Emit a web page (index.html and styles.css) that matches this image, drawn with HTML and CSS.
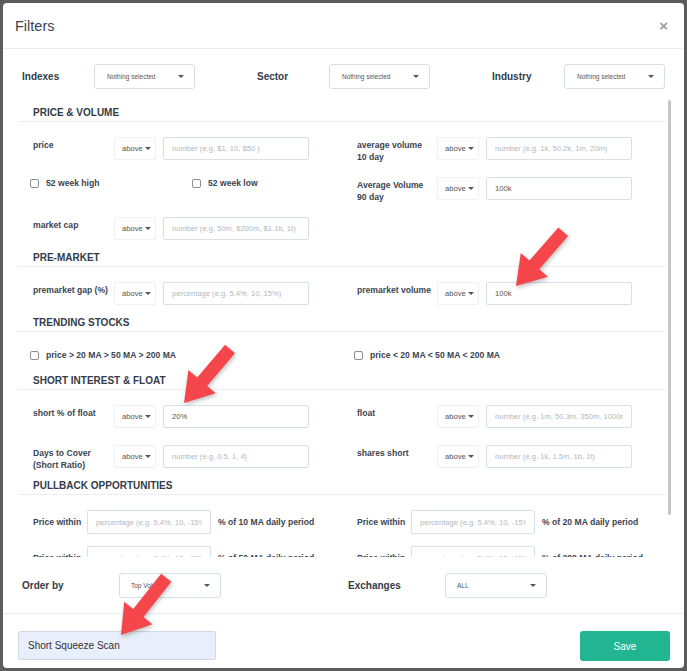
FILE: index.html
```html
<!DOCTYPE html>
<html>
<head>
<meta charset="utf-8">
<title>Filters</title>
<link rel="stylesheet" href="styles.css">
</head>
<body>
<div class="modal">
  <div class="modal-header">
    <h4 class="modal-title">Filters</h4>
    <span class="close">×</span>
  </div>
  <div class="modal-body">
    <div class="top-row">
      <div class="top-field"><div class="top-label">Indexes</div><div class="select select-lg"><span>Nothing selected</span><i class="caret"></i></div></div>
      <div class="top-field"><div class="top-label">Sector</div><div class="select select-lg"><span>Nothing selected</span><i class="caret"></i></div></div>
      <div class="top-field"><div class="top-label">Industry</div><div class="select select-lg"><span>Nothing selected</span><i class="caret"></i></div></div>
    </div>

    <div class="scroll">
      <div class="scroll-content">
        <section class="section">
          <h5 class="section-title">Price &amp; Volume</h5>
          <div class="section-body">
            <div class="col">
              <div class="field"><div class="field-label">price</div><div class="select select-sm"><span>above</span><i class="caret"></i></div><input class="input" placeholder="number (e.g. $1, 10, $50 )"></div>
              <div class="check-row">
                <label class="check"><input type="checkbox" class="cb"><span>52 week high</span></label>
                <label class="check"><input type="checkbox" class="cb"><span>52 week low</span></label>
              </div>
              <div class="field"><div class="field-label">market cap</div><div class="select select-sm"><span>above</span><i class="caret"></i></div><input class="input" placeholder="number (e.g. 50m, $200m, $1.1b, 1t)"></div>
            </div>
            <div class="col col-right">
              <div class="field"><div class="field-label">average volume<br>10 day</div><div class="select select-sm"><span>above</span><i class="caret"></i></div><input class="input" placeholder="number (e.g. 1k, 50.2k, 1m, 20m)"></div>
              <div class="field"><div class="field-label">Average Volume<br>90 day</div><div class="select select-sm"><span>above</span><i class="caret"></i></div><input class="input" value="100k"></div>
            </div>
          </div>
        </section>

        <section class="section">
          <h5 class="section-title">Pre-Market</h5>
          <div class="section-body">
            <div class="col">
              <div class="field"><div class="field-label">premarket gap (%)</div><div class="select select-sm"><span>above</span><i class="caret"></i></div><input class="input" placeholder="percentage (e.g. 5.4%, 10, 15%)"></div>
            </div>
            <div class="col col-right">
              <div class="field"><div class="field-label">premarket volume</div><div class="select select-sm"><span>above</span><i class="caret"></i></div><input class="input" value="100k"></div>
            </div>
          </div>
        </section>

        <section class="section">
          <h5 class="section-title">Trending Stocks</h5>
          <div class="section-body">
            <div class="trend-row"><label class="check"><input type="checkbox" class="cb"><span>price &gt; 20 MA &gt; 50 MA &gt; 200 MA</span></label></div>
            <div class="trend-row"><label class="check"><input type="checkbox" class="cb"><span>price &lt; 20 MA &lt; 50 MA &lt; 200 MA</span></label></div>
          </div>
        </section>

        <section class="section">
          <h5 class="section-title">Short Interest &amp; Float</h5>
          <div class="section-body">
            <div class="col">
              <div class="field"><div class="field-label">short % of float</div><div class="select select-sm"><span>above</span><i class="caret"></i></div><input class="input" value="20%"></div>
              <div class="field"><div class="field-label">Days to Cover<br>(Short Ratio)</div><div class="select select-sm"><span>above</span><i class="caret"></i></div><input class="input" placeholder="number (e.g. 0.5, 1, 4)"></div>
            </div>
            <div class="col col-right">
              <div class="field"><div class="field-label">float</div><div class="select select-sm"><span>above</span><i class="caret"></i></div><input class="input" placeholder="number (e.g. 1m, 50.3m, 350m, 1000m)"></div>
              <div class="field"><div class="field-label">shares short</div><div class="select select-sm"><span>above</span><i class="caret"></i></div><input class="input" placeholder="number (e.g. 1k, 1.5m, 1b, 1t)"></div>
            </div>
          </div>
        </section>

        <section class="section">
          <h5 class="section-title">Pullback Opportunities</h5>
          <div class="section-body">
            <div class="col pb-col">
              <div class="pb-row"><div class="pb-label">Price within</div><input class="input pb-input" placeholder="percentage (e.g. 5.4%, 10, -15%)"><span class="pb-text">% of 10 MA daily period</span></div>
              <div class="pb-row"><div class="pb-label">Price within</div><input class="input pb-input" placeholder="percentage (e.g. 5.4%, 10, -15%)"><span class="pb-text">% of 50 MA daily period</span></div>
            </div>
            <div class="col pb-col">
              <div class="pb-row"><div class="pb-label">Price within</div><input class="input pb-input" placeholder="percentage (e.g. 5.4%, 10, -15%)"><span class="pb-text">% of 20 MA daily period</span></div>
              <div class="pb-row"><div class="pb-label">Price within</div><input class="input pb-input" placeholder="percentage (e.g. 5.4%, 10, -15%)"><span class="pb-text">% of 200 MA daily period</span></div>
            </div>
          </div>
        </section>
      </div>
      <div class="scrollbar"><div class="thumb"></div></div>
    </div>

    <div class="order-row">
      <div class="order-field"><div class="order-label">Order by</div><div class="select select-md"><span>Top Volume</span><i class="caret"></i></div></div>
      <div class="order-field"><div class="order-label">Exchanges</div><div class="select select-md"><span>ALL</span><i class="caret"></i></div></div>
    </div>
  </div>
  <div class="modal-footer">
    <input class="name-input" value="Short Squeeze Scan">
    <button class="btn-save">Save</button>
  </div>
</div>

<svg class="arrows" width="687" height="671" viewBox="0 0 687 671">
  <g fill="#f5474b">
    <polygon transform="translate(516 286) rotate(131)" points="0,0 -28,-18 -28,-6.5 -72,-6.5 -72,6.5 -28,6.5 -28,18"/>
    <polygon transform="translate(184 403) rotate(130.4)" points="0,0 -28,-18 -28,-6.5 -71,-6.5 -71,6.5 -28,6.5 -28,18"/>
    <polygon transform="translate(121 635) rotate(128.3)" points="0,0 -28,-18 -28,-6.5 -73,-6.5 -73,6.5 -28,6.5 -28,18"/>
  </g>
</svg>
</body>
</html>
```

FILE: styles.css
```css
* { box-sizing: border-box; }
html, body { margin: 0; padding: 0; }
body {
  width: 687px;
  height: 671px;
  padding: 3px;
  background: #5c5c5c;
  font-family: "Liberation Sans", Arial, sans-serif;
  position: relative;
  overflow: hidden;
}
.modal {
  width: 681px;
  height: 665px;
  background: #fff;
  border-radius: 4px;
  display: flex;
  flex-direction: column;
  overflow: hidden;
}
.modal-header {
  flex: none;
  height: 46px;
  border-bottom: 1px solid #e9ecf0;
  display: flex;
  align-items: center;
  justify-content: space-between;
  padding: 0 16px 0 12px;
}
.modal-title {
  margin: 0;
  font-size: 14.5px;
  font-weight: normal;
  color: #394350;
}
.close {
  font-size: 15px;
  font-weight: bold;
  color: #9d9d9d;
  line-height: 1;
}
.modal-body {
  flex: none;
  padding: 15px 12px 15px 15px;
}
.top-row {
  display: grid;
  grid-template-columns: repeat(3, 173px);
  column-gap: 62px;
  margin: 0 0 6px 4px;
  height: 25px;
}
.top-field, .order-field {
  display: flex;
  align-items: center;
}
.top-label {
  width: 72px;
  font-size: 10px;
  font-weight: bold;
  color: #333c48;
}
.select {
  display: flex;
  align-items: center;
  justify-content: space-between;
  background: #fff;
  color: #555;
  white-space: nowrap;
}
.select-lg {
  width: 101px;
  height: 25px;
  border: 1px solid #d8dee8;
  border-radius: 3px;
  padding: 0 10px 0 12px;
  font-size: 6.5px;
}
.select-md {
  width: 102px;
  height: 25px;
  border: 1px solid #d8dee8;
  border-radius: 3px;
  padding: 0 10px 0 11px;
  font-size: 6.5px;
}
.select-sm {
  flex: none;
  width: 42px;
  height: 23px;
  border: 1px solid #eef0f3;
  border-radius: 2px;
  padding: 0 4px 0 7px;
  font-size: 7.6px;
  margin-right: 7px;
}
.caret {
  width: 0;
  height: 0;
  border-top: 3px solid #555;
  border-left: 3px solid transparent;
  border-right: 3px solid transparent;
}
.scroll {
  display: flex;
  height: 462px;
}
.scroll-content {
  flex: 1;
  overflow: hidden;
}
.scrollbar {
  width: 6px;
  padding: 5px 1px 0 2px;
}
.thumb {
  height: 415px;
  background: #c6c6c6;
  border-radius: 2px;
}
.section-title {
  margin: 0;
  padding: 12px 0 2px 15px;
  line-height: 12px;
  font-size: 10px;
  font-weight: bold;
  text-transform: uppercase;
  color: #333c48;
  border-bottom: 1px solid #eceef2;
}
.section-body {
  display: grid;
  grid-template-columns: 324px 1fr;
  padding: 15px 0 0 15px;
}
.col {
  display: flex;
  flex-direction: column;
  gap: 17px;
}
.field {
  display: flex;
  align-items: flex-start;
  height: 23px;
}
.field-label {
  flex: none;
  width: 81px;
  padding-top: 2px;
  line-height: 12px;
  font-size: 8.6px;
  font-weight: bold;
  color: #3b4451;
  white-space: nowrap;
}
.col-right .field-label { width: 80px; }
.input {
  flex: none;
  width: 146px;
  height: 23px;
  border: 1px solid #d8deea;
  border-radius: 2px;
  padding: 0 8px;
  margin: 0;
  font: 7.6px "Liberation Sans", Arial, sans-serif;
  color: #555;
  background: #fff;
  outline: none;
}
.input::placeholder { color: #b3b7bd; }
.check-row {
  display: flex;
  height: 23px;
  margin-left: -3px;
}
.check {
  display: flex;
  align-items: center;
  gap: 7px;
  width: 162px;
  height: 12px;
  font-size: 8.6px;
  font-weight: bold;
  color: #3b4451;
  white-space: nowrap;
}
.cb {
  -webkit-appearance: none;
  appearance: none;
  flex: none;
  margin: 0;
  width: 9px;
  height: 9px;
  border: 1px solid #8f8f8f;
  border-radius: 2px;
  background: #fff;
}
.trend-row {
  display: flex;
  align-items: center;
  height: 16px;
  margin-left: -3px;
}
.pb-col { gap: 12px; }
.pb-row {
  display: flex;
  align-items: center;
  height: 24px;
}
.pb-label {
  flex: none;
  width: 54px;
  font-size: 8.6px;
  font-weight: bold;
  color: #3b4451;
}
.pb-input {
  width: 124px;
  height: 24px;
  margin-right: 7px;
}
.pb-text {
  font-size: 8.6px;
  font-weight: bold;
  color: #3b4451;
  white-space: nowrap;
}
.order-row {
  display: grid;
  grid-template-columns: 326px 1fr;
  height: 25px;
  margin: 16px 0 0 4px;
}
.order-label {
  width: 97px;
  font-size: 10px;
  font-weight: bold;
  color: #333c48;
}
.modal-footer {
  flex: none;
  border-top: 1px solid #e9ecf0;
  padding: 17px 14px 7px 15px;
  display: flex;
  justify-content: space-between;
  align-items: flex-start;
}
.name-input {
  width: 198px;
  height: 29px;
  margin: 0;
  border: 1px solid #cfd8e6;
  border-radius: 2px;
  background: #e8effb;
  padding: 0 9px;
  font: 10px "Liberation Sans", Arial, sans-serif;
  color: #333;
  outline: none;
}
.btn-save {
  width: 90px;
  height: 30px;
  border: none;
  border-radius: 3px;
  background: #22b592;
  color: #fff;
  font: 10px "Liberation Sans", Arial, sans-serif;
  padding: 0;
}
.arrows {
  position: absolute;
  top: 0;
  left: 0;
  pointer-events: none;
  filter: drop-shadow(1px 2px 2px rgba(0, 0, 0, 0.25));
}
```
